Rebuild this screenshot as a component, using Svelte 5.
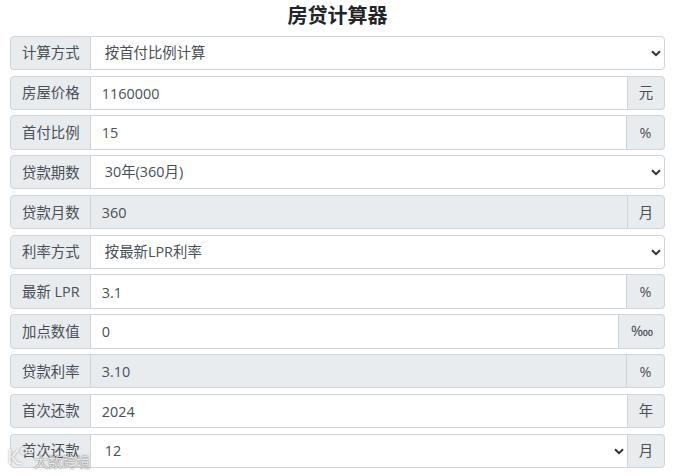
<script>
	const rows = [
		{ label: "计算方式", type: "select", value: "按首付比例计算" },
		{ label: "房屋价格", type: "input", value: "1160000", unit: "元" },
		{ label: "首付比例", type: "input", value: "15", unit: "%", kind: "pct" },
		{ label: "贷款期数", type: "select", value: "30年(360月)" },
		{ label: "贷款月数", type: "input", value: "360", unit: "月", readonly: true },
		{ label: "利率方式", type: "select", value: "按最新LPR利率" },
		{ label: "最新 LPR", type: "input", value: "3.1", unit: "%", kind: "pct" },
		{ label: "加点数值", type: "input", value: "0", unit: "‱", kind: "bp" },
		{ label: "贷款利率", type: "input", value: "3.10", unit: "%", kind: "pct", readonly: true },
		{ label: "首次还款", type: "input", value: "2024", unit: "年" },
		{ label: "首次还款", type: "select", value: "12", unit: "月" }
	];
</script>

<main>
	<h1>房贷计算器</h1>
	{#each rows as row}
		<div class="group">
			<span class="addon first">{row.label}</span>
			{#if row.type === "select"}
				<div class="select-wrap">
					<select>
						<option>{row.value}</option>
					</select>
					<svg class="chevron" width="10" height="7" viewBox="0 0 10 7">
						<path d="M1 1.2l4 4 4-4" fill="none" stroke="#333" stroke-width="2" />
					</svg>
				</div>
			{:else}
				<input type="text" value={row.value} readonly={row.readonly} class:locked={row.readonly} />
			{/if}
			{#if row.unit}
				<span class="addon last {row.kind ?? ''}">{row.unit}</span>
			{/if}
		</div>
	{/each}
	<div class="watermark">
		<svg width="26" height="20" viewBox="0 0 26 20">
			<g fill="none" stroke="#fff" stroke-width="1.6" opacity="0.85">
				<path d="M2 2v15M10 3L4 10l5 6 5 1" />
				<circle cx="16" cy="4" r="2.6" />
				<circle cx="23" cy="4" r="1.8" />
			</g>
		</svg>
		<span>大数跨境</span>
	</div>
</main>

<style>
	:global(body) {
		margin: 0;
		background: #fff;
		overflow: hidden;
	}
	main {
		position: relative;
		height: 476px;
		box-sizing: border-box;
		padding: 0 15px 0 10px;
		font-family: "Open Sans", "Noto Sans CJK SC", sans-serif;
		font-size: 14.4px;
		color: #495057;
		overflow: hidden;
	}
	h1 {
		margin: 0;
		height: 35.72px;
		line-height: 32px;
		font-size: 20px;
		font-weight: 700;
		text-align: center;
		color: #212529;
	}
	.group {
		display: flex;
		height: 34.4px;
		margin-bottom: 5.4px;
	}
	.addon {
		display: flex;
		align-items: center;
		box-sizing: border-box;
		padding: 0 10.8px 2px;
		background: #e9ecef;
		border: 1px solid #ced4da;
		white-space: nowrap;
	}
	.first {
		padding-left: 11px;
		padding-right: 10.2px;
		border-radius: 4px 0 0 4px;
	}
	.last {
		border-radius: 0 4px 4px 0;
		margin-left: -1px;
	}
	.pct {
		padding-left: 12.6px;
		padding-right: 12.6px;
		padding-bottom: 0;
	}
	.bp {
		padding-left: 11.5px;
		padding-right: 11.5px;
	}
	input,
	select {
		box-sizing: border-box;
		width: 100%;
		height: 100%;
		font: inherit;
		color: #495057;
		background: #fff;
		border: 1px solid #ced4da;
		outline: none;
		appearance: none;
	}
	input {
		flex: 1;
		min-width: 0;
		margin-left: -1px;
		padding: 1px 11px 0;
	}
	input:last-child,
	.select-wrap:last-child select {
		border-radius: 0 4px 4px 0;
	}
	input.locked {
		background: #e9ecef;
	}
	.select-wrap {
		position: relative;
		flex: 1;
		min-width: 0;
		margin-left: -1px;
	}
	select {
		display: block;
		padding: 0 11px 1px 14px;
	}
	.chevron {
		position: absolute;
		right: 4px;
		top: 14px;
	}
	.watermark {
		position: absolute;
		left: 8px;
		top: 447px;
		display: flex;
		align-items: flex-end;
		height: 24px;
		color: rgba(255, 255, 255, 0.85);
		font-size: 14px;
		line-height: 18px;
		text-shadow: 0 0 1px #5a5a5a, 0 0 2px rgba(120, 120, 120, 0.6);
	}
	.watermark svg {
		align-self: flex-start;
		filter: drop-shadow(0 0 1px rgba(90, 90, 90, 0.7));
	}
</style>
